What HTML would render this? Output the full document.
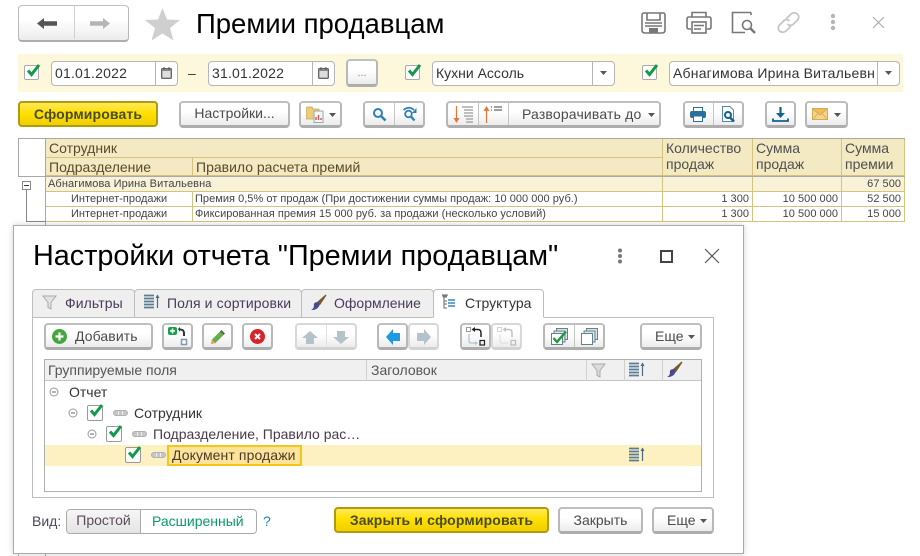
<!DOCTYPE html>
<html lang="ru"><head><meta charset="utf-8"><title>Премии продавцам</title>
<style>
*{box-sizing:border-box}
html,body{margin:0;padding:0;background:#fff}
#p{position:relative;width:920px;height:556px;overflow:hidden;background:#fff;font-family:"Liberation Sans",sans-serif;font-size:14px;color:#4b4b4b}
#p div,#p span.a,#p svg{position:absolute}
.t{white-space:nowrap;line-height:16px}
.btn{background:linear-gradient(#fff 40%,#ececec);border:2px solid #b8b8b8;border-top-color:#c0c0c0;border-bottom:3px solid #adadad;border-radius:4px;text-align:center;line-height:21px;white-space:nowrap}
.dis{border-color:#d8d8d8;border-bottom-color:#d2d2d2}
.y{background:linear-gradient(#ffe95a,#ffe100 45%,#f0cf00);border:2px solid #b09a10;border-radius:4px;font-weight:bold;color:#4a4a2a;text-align:center;line-height:22px;white-space:nowrap;letter-spacing:.13px}
.inp{background:#fff;border:1px solid #b5b5b5;border-radius:4px;color:#333;line-height:23px;padding-left:3px;white-space:nowrap;overflow:hidden}
.v{width:1px;background:#c4c4c4}
.h{background:#f3eac3;border-right:1px solid #d4c27d;border-bottom:1px solid #d4c27d;padding-left:3px;color:#5b4a2a;line-height:16px;white-space:nowrap}
.c{font-size:11px;line-height:14px;color:#444;border-right:1px solid #d4c27d;border-bottom:1px solid #d4c27d;white-space:nowrap;overflow:hidden;padding:0 3px;letter-spacing:.03px}
.g{background:#f8f2d9}
.r{text-align:right}
.tab{background:#efefef;border:1px solid #bdbdbd;border-radius:4px 4px 0 0;height:29px;line-height:27px;color:#4a3a5a;white-space:nowrap}
</style></head><body>
<div id="p">

<!-- nav -->
<div class="btn" style="left:18px;top:5px;width:111px;height:37px;border-width:1px;border-bottom-width:2px"></div>
<div class="v" style="left:74px;top:6px;height:33px;background:#d0d0d0"></div>
<svg style="left:36px;top:16px" width="22" height="15" viewBox="0 0 22 15"><path d="M1 7.500 8 2V5.300H21V9.700H8V13Z" fill="#555"/></svg>
<svg style="left:89px;top:16px" width="22" height="15" viewBox="0 0 22 15"><path d="M21 7.500 14 2V5.300H1V9.700H14V13Z" fill="#b5b5b5"/></svg>
<svg style="left:144px;top:7px" width="37" height="34" viewBox="0 0 37 34"><path d="M18.500 1 23 12.500 36 13 26 21 29.500 33.500 18.500 26.500 7.500 33.500 11 21 1 13 14 12.500Z" fill="#cfcfcf"/></svg>
<div class="t" style="left:196px;top:7px;font-size:27.500px;line-height:34px;color:#000">Премии продавцам</div>

<!-- top right -->
<svg style="left:641px;top:11px" width="25" height="23" viewBox="0 0 25 23" fill="none" stroke="#777" stroke-width="1.600"><path d="M3 2H22Q24 2 24 4V19Q24 22 21 22H4Q1 22 1 19V4Q1 2 3 2Z"/><path d="M6 2V9H19V2M4 12H21M4 15H21"/><rect x="8" y="17" width="9" height="5" fill="#777" stroke="none"/></svg>
<svg style="left:686px;top:11px" width="26" height="23" viewBox="0 0 26 23" fill="none" stroke="#777" stroke-width="1.600"><path d="M6 6V1.500H20V6M5 18H3Q1 18 1 16V8Q1 6 3 6H23Q25 6 25 8V16Q25 18 23 18H21"/><rect x="6" y="11" width="14" height="11"/><path d="M8 14.500H18M8 18H15"/></svg>
<svg style="left:731px;top:11px" width="26" height="23" viewBox="0 0 26 23" fill="none" stroke="#777" stroke-width="1.600"><path d="M20 1.500H1.500V21.500H14M20 1.500V4"/><circle cx="16" cy="14" r="4.500"/><path d="M19.500 17.500 24 22" stroke-width="2.400"/></svg>
<svg style="left:776px;top:11px" width="25" height="23" viewBox="0 0 25 23" fill="none" stroke="#c4c4c4" stroke-width="1.700"><path d="M10 8 15 3Q18 .5 21.500 3 24 6 21.500 9L17 13.500Q14 15.500 11.500 13"/><path d="M15 15 10 20Q7 22.500 3.500 20 1 17 3.500 14L8 9.500Q11 7.500 13.500 10"/></svg>
<svg style="left:830px;top:13px" width="6" height="18" viewBox="0 0 6 18" fill="#b5b5b5"><circle cx="3" cy="3" r="2.200"/><circle cx="3" cy="9" r="2.200"/><circle cx="3" cy="15" r="2.200"/></svg>
<svg style="left:872px;top:16px" width="13" height="13" viewBox="0 0 13 13" stroke="#aaa" stroke-width="1.100"><path d="M1 1 12 12M12 1 1 12"/></svg>

<!-- filter -->
<div style="left:18px;top:54px;width:885px;height:38px;background:#fdf8dc"></div>
<div style="left:24px;top:65px;width:15px;height:15px;background:#fff;border:1px solid #aaa;border-radius:2px"></div>
<svg style="left:26px;top:63px" width="15" height="14" viewBox="0 0 15 14"><path d="M2 7.500 5.500 11.500 13 2" fill="none" stroke="#12994a" stroke-width="3"/></svg>
<div class="inp" style="left:51px;top:61px;width:127px;height:25px;letter-spacing:.2px">01.01.2022</div>
<div class="v" style="left:155px;top:62px;height:23px;background:#b5b5b5"></div>
<svg style="left:161px;top:67px" width="11" height="12" viewBox="0 0 11 12"><rect x=".5" y="1.500" width="10" height="10" rx="1" fill="#8a8a8a" stroke="#666"/><rect x="1.500" y="4" width="8" height="6.500" fill="#ddd"/><path d="M3 0V3M8 0V3" stroke="#555"/></svg>
<div class="t" style="left:188px;top:65px;color:#333">–</div>
<div class="inp" style="left:208px;top:61px;width:127px;height:25px;letter-spacing:.2px">31.01.2022</div>
<div class="v" style="left:312px;top:62px;height:23px;background:#b5b5b5"></div>
<svg style="left:318px;top:67px" width="11" height="12" viewBox="0 0 11 12"><rect x=".5" y="1.500" width="10" height="10" rx="1" fill="#8a8a8a" stroke="#666"/><rect x="1.500" y="4" width="8" height="6.500" fill="#ddd"/><path d="M3 0V3M8 0V3" stroke="#555"/></svg>
<div class="btn" style="left:346px;top:59px;width:32px;height:28px;font-size:11px;line-height:24px;color:#888">...</div>
<div style="left:405px;top:65px;width:15px;height:15px;background:#fff;border:1px solid #aaa;border-radius:2px"></div>
<svg style="left:407px;top:63px" width="15" height="14" viewBox="0 0 15 14"><path d="M2 7.500 5.500 11.500 13 2" fill="none" stroke="#12994a" stroke-width="3"/></svg>
<div class="inp" style="left:432px;top:61px;width:183px;height:25px">Кухни Ассоль</div>
<div class="v" style="left:592px;top:62px;height:23px;background:#b5b5b5"></div>
<svg style="left:600px;top:71px" width="7" height="4"><path d="M0 0H7L3.500 4Z" fill="#555"/></svg>
<div style="left:642px;top:65px;width:15px;height:15px;background:#fff;border:1px solid #aaa;border-radius:2px"></div>
<svg style="left:644px;top:63px" width="15" height="14" viewBox="0 0 15 14"><path d="M2 7.500 5.500 11.500 13 2" fill="none" stroke="#12994a" stroke-width="3"/></svg>
<div class="inp" style="left:669px;top:61px;width:231px;height:25px;letter-spacing:.2px"><span style="display:block;width:201px;overflow:hidden">Абнагимова Ирина Витальевна</span></div>
<div class="v" style="left:877px;top:62px;height:23px;background:#b5b5b5"></div>
<svg style="left:885px;top:71px" width="7" height="4"><path d="M0 0H7L3.500 4Z" fill="#555"/></svg>

<!-- buttons -->
<div class="y" style="left:18px;top:101px;width:140px;height:26px">Сформировать</div>
<div class="btn" style="left:179px;top:101px;width:111px;height:27px">Настройки...</div>
<div class="btn" style="left:299px;top:101px;width:43px;height:27px"></div>
<svg style="left:306px;top:106px" width="18" height="17" viewBox="0 0 18 17"><path d="M0 3 1 1H6L7 3H13V13H0Z" fill="#eccb7a" stroke="#c9a24f" stroke-width=".8"/><rect x="8" y="5" width="9" height="11.500" fill="#f5f5f5" stroke="#9aa"/><path d="M10 14V11M12.500 14V9M15 14V12" stroke="#c55" stroke-width="1.400"/></svg>
<svg style="left:329px;top:113px" width="7" height="4"><path d="M0 0H7L3.500 4Z" fill="#555"/></svg>

<div class="btn" style="left:363px;top:101px;width:62px;height:27px"></div>
<div class="v" style="left:394px;top:103px;height:22px"></div>
<svg style="left:372px;top:107px" width="15" height="15" viewBox="0 0 15 15" fill="none" stroke="#2e7fb5" stroke-width="2"><circle cx="6" cy="6" r="4"/><path d="M9 9 13.500 13.500" stroke-width="2.500"/></svg>
<svg style="left:402px;top:106px" width="16" height="16" viewBox="0 0 16 16" fill="none" stroke="#2e7fb5" stroke-width="1.800"><circle cx="6.500" cy="8" r="3.300"/><path d="M9 10.500 12.500 14.500" stroke-width="2.300"/><path d="M1.500 4Q7 -.5 12 4"/><path d="M14.500 2V7H10Z" fill="#2e7fb5" stroke="none"/></svg>

<div class="btn" style="left:446px;top:101px;width:215px;height:27px;line-height:23px;text-align:left;padding-left:74px;letter-spacing:.17px">Разворачивать до</div>
<div class="v" style="left:478px;top:103px;height:22px"></div>
<div class="v" style="left:508px;top:103px;height:22px"></div>
<svg style="left:452px;top:105px" width="22" height="19" viewBox="0 0 22 19"><path d="M4.500 1V17" stroke="#e8743a" stroke-width="1.200"/><path d="M1.500 13 4.500 18 7.500 13Z" fill="#e8743a"/><path d="M10 2H21M12 5H21M12 8H21M12 11H21M14 14H21M14 17H21" stroke="#999" stroke-width="1.200"/></svg>
<svg style="left:482px;top:105px" width="22" height="19" viewBox="0 0 22 19"><path d="M4.500 2V18" stroke="#e8743a" stroke-width="1.200"/><path d="M1.500 6 4.500 1 7.500 6Z" fill="#e8743a"/><path d="M9 2H10M12 2H20M9 5H10M12 5H20" stroke="#666" stroke-width="1.200"/></svg>
<svg style="left:648px;top:113px" width="7" height="4"><path d="M0 0H7L3.500 4Z" fill="#555"/></svg>

<div class="btn" style="left:683px;top:101px;width:61px;height:27px"></div>
<div class="v" style="left:713px;top:103px;height:22px"></div>
<svg style="left:690px;top:107px" width="16" height="15" viewBox="0 0 16 15"><rect x="3.500" y=".5" width="9" height="4" fill="#fff" stroke="#2b6f9e"/><rect x="0" y="4" width="16" height="7" rx="2" fill="#2b6f9e"/><rect x="3.500" y="9" width="9" height="5.500" fill="#fff" stroke="#2b6f9e"/></svg>
<svg style="left:721px;top:106px" width="16" height="17" viewBox="0 0 16 17"><path d="M1.500 .5H9L12.500 4V15.500H1.500Z" fill="#fff" stroke="#5a86a6"/><circle cx="7" cy="9" r="3" fill="none" stroke="#14608f" stroke-width="2"/><path d="M9 11.500 13 15.500" stroke="#14608f" stroke-width="2.500"/></svg>
<div class="btn" style="left:765px;top:101px;width:31px;height:27px"></div>
<svg style="left:772px;top:106px" width="17" height="16" viewBox="0 0 17 16"><path d="M8.500 1V10" stroke="#14608f" stroke-width="2.200"/><path d="M4 7H13L8.500 12Z" fill="#14608f"/><path d="M1 12.500V15H16V12.500" fill="none" stroke="#14608f" stroke-width="1.800"/></svg>
<div class="btn" style="left:805px;top:101px;width:43px;height:27px"></div>
<svg style="left:812px;top:108px" width="16" height="13" viewBox="0 0 16 13"><rect x=".5" y=".5" width="15" height="11" fill="#f4d48d" stroke="#d9a94c"/><path d="M1 1 8 7 15 1" fill="#eebd62" stroke="#d9a94c"/><path d="M1 11 6 5.500M15 11 10 5.500" fill="none" stroke="#e0b05a"/></svg>
<svg style="left:834px;top:113px" width="7" height="4"><path d="M0 0H7L3.500 4Z" fill="#555"/></svg>

<!-- report table -->
<div style="left:18px;top:138px;width:887px;height:1px;background:#a8a8a8"></div>
<div style="left:18px;top:138px;width:1px;height:39px;background:#a8a8a8"></div>
<div style="left:45px;top:139px;width:1px;height:86px;background:#a8a8a8"></div>
<div style="left:18px;top:176px;width:887px;height:1px;background:#a8a8a8"></div>
<div class="h" style="left:46px;top:139px;width:617px;height:19px;line-height:19px">Сотрудник</div>
<div class="h" style="left:46px;top:158px;width:147px;height:18px;line-height:18px">Подразделение</div>
<div class="h" style="left:193px;top:158px;width:470px;height:18px;line-height:18px">Правило расчета премий</div>
<div class="h" style="left:663px;top:139px;width:90px;height:37px;white-space:normal;line-height:16px;padding-top:1px;color:#4f4f4f">Количество продаж</div>
<div class="h" style="left:753px;top:139px;width:89px;height:37px;white-space:normal;padding-top:1px;color:#4f4f4f">Сумма продаж</div>
<div class="h" style="left:842px;top:139px;width:63px;height:37px;white-space:normal;padding-top:1px;color:#4f4f4f">Сумма премии</div>

<div class="c g" style="left:46px;top:177px;width:617px;height:15px;padding-left:2px;line-height:15px;letter-spacing:.1px">Абнагимова Ирина Витальевна</div>
<div class="c g" style="left:663px;top:177px;width:90px;height:15px"></div>
<div class="c g" style="left:753px;top:177px;width:89px;height:15px"></div>
<div class="c g r" style="left:842px;top:177px;width:63px;height:15px;line-height:15px">67 500</div>

<div class="c" style="left:46px;top:192px;width:147px;height:15px;padding-left:25px">Интернет-продажи</div>
<div class="c" style="left:193px;top:192px;width:470px;height:15px;padding-left:2px">Премия 0,5% от продаж (При достижении суммы продаж: 10 000 000 руб.)</div>
<div class="c r" style="left:663px;top:192px;width:90px;height:15px">1 300</div>
<div class="c r" style="left:753px;top:192px;width:89px;height:15px">10 500 000</div>
<div class="c r" style="left:842px;top:192px;width:63px;height:15px">52 500</div>

<div class="c" style="left:46px;top:207px;width:147px;height:15px;padding-left:25px">Интернет-продажи</div>
<div class="c" style="left:193px;top:207px;width:470px;height:15px;padding-left:2px">Фиксированная премия 15 000 руб. за продажи (несколько условий)</div>
<div class="c r" style="left:663px;top:207px;width:90px;height:15px">1 300</div>
<div class="c r" style="left:753px;top:207px;width:89px;height:15px">10 500 000</div>
<div class="c r" style="left:842px;top:207px;width:63px;height:15px">15 000</div>

<svg style="left:22px;top:181px" width="24" height="41" viewBox="0 0 24 41"><rect x=".5" y=".5" width="8" height="8" fill="#fff" stroke="#888"/><path d="M2 4.500H7" stroke="#333"/><path d="M4.500 9V40.500H24" fill="none" stroke="#888"/></svg>

<!-- table remnants under dialog -->
<div style="left:18px;top:553px;width:1px;height:3px;background:#bbb"></div>
<div style="left:45px;top:553px;width:1px;height:3px;background:#a8a8a8"></div>

<!-- dialog -->
<div style="left:13px;top:225px;width:731px;height:329px;background:#fff;border:1px solid #a9a9a9;box-shadow:0 0 6px rgba(0,0,0,.18)"></div>
<div class="t" style="left:33px;top:238px;font-size:28.800px;line-height:36px;color:#000">Настройки отчета "Премии продавцам"</div>
<svg style="left:617px;top:248px" width="6" height="16" viewBox="0 0 6 16" fill="#777"><circle cx="3" cy="2.500" r="2"/><circle cx="3" cy="8" r="2"/><circle cx="3" cy="13.500" r="2"/></svg>
<div style="left:660px;top:250px;width:13px;height:13px;border:2px solid #444"></div>
<svg style="left:704px;top:248px" width="16" height="16" viewBox="0 0 16 16" stroke="#555" stroke-width="1.200"><path d="M1 1 15 15M15 1 1 15"/></svg>

<!-- tabs -->
<div style="left:32px;top:317px;width:682px;height:181px;border:1px solid #bdbdbd;background:#fff"></div>
<div class="tab" style="left:32px;top:289px;width:103px;padding-left:32px;letter-spacing:.1px">Фильтры</div>
<div class="tab" style="left:134px;top:289px;width:168px;padding-left:32px;letter-spacing:.1px">Поля и сортировки</div>
<div class="tab" style="left:301px;top:289px;width:133px;padding-left:32px">Оформление</div>
<div class="tab" style="left:433px;top:289px;width:111px;padding-left:31px;background:#fff;height:29px;border-bottom:1px solid #fff;color:#333">Структура</div>
<svg style="left:42px;top:295px" width="15" height="15" viewBox="0 0 15 15"><path d="M1 1H14L9 7.500V14L6 12.500V7.500Z" fill="#e2e2e2" stroke="#aaa"/></svg>
<svg style="left:143px;top:294px" width="18" height="16" viewBox="0 0 18 16"><path d="M1 1.500H11M1 4.500H11M1 7.500H11M1 10.500H11M1 13.500H11" stroke="#5b7c93" stroke-width="1.700"/><path d="M14.500 1V14" stroke="#4a6a80" stroke-width="1.200"/><path d="M12.500 4 14.500 .5 16.500 4Z" fill="#4a6a80"/></svg>
<svg style="left:310px;top:294px" width="17" height="17" viewBox="0 0 17 17"><path d="M16 1 8 8 10 10Z" fill="#7a5a2a" stroke="#7a5a2a" stroke-width="1.200"/><path d="M8 8Q3 8 4 12 3.500 15 1 16 8 16.500 10 10Z" fill="#4a4a8a"/></svg>
<svg style="left:441px;top:294px" width="16" height="16" viewBox="0 0 16 16"><path d="M1 1H7M2 1V3M3 3V14H6M3 7H6M3 10H6" fill="none" stroke="#666"/><rect x="2" y="1" width="4" height="2.500" fill="#777"/><path d="M7 6H14M7 9H14M7 12H14" stroke="#3a86b8" stroke-width="1.500"/></svg>

<!-- dialog toolbar -->
<div class="btn" style="left:44px;top:323px;width:109px;height:27px;text-align:left;padding-left:29px;line-height:23px;letter-spacing:.1px">Добавить</div>
<svg style="left:52px;top:329px" width="15" height="15" viewBox="0 0 15 15"><circle cx="7.500" cy="7.500" r="7.500" fill="#43a63e"/><path d="M7.500 3.500V11.500M3.500 7.500H11.500" stroke="#fff" stroke-width="2.200"/></svg>
<div class="btn" style="left:162px;top:323px;width:31px;height:27px"></div>
<svg style="left:168px;top:327px" width="20" height="19" viewBox="0 0 20 19"><rect x="0" y="0" width="9" height="8" rx="2" fill="#15a04a"/><path d="M4.500 1.500V6.500M2 4H7" stroke="#fff" stroke-width="1.500"/><path d="M10 2 12 0V1.500Q17 1.500 17 6.500V9H15V6Q15 3.500 12 3.500V5Z" fill="#333"/><rect x="13.500" y="12.500" width="5" height="5" fill="#fff" stroke="#7b9bb5" stroke-width="1.500"/></svg>
<div class="btn" style="left:202px;top:323px;width:31px;height:27px"></div>
<svg style="left:210px;top:329px" width="16" height="16" viewBox="0 0 16 16"><path d="M11.500 1 15 4.500 5.500 14 1 15 2 10.500Z" fill="#67ad4d"/><path d="M2 10.500 1 15 5.500 14Z" fill="#e3a44e"/><path d="M11.500 1 15 4.500 13.500 6 10 2.500Z" fill="#5a6a5a"/></svg>
<div class="btn" style="left:242px;top:323px;width:31px;height:27px"></div>
<svg style="left:250px;top:329px" width="15" height="15" viewBox="0 0 15 15"><circle cx="7.500" cy="7.500" r="7.500" fill="#d8232a"/><path d="M5 5 10 10M10 5 5 10" stroke="#fff" stroke-width="2"/></svg>

<div class="btn dis" style="left:295px;top:323px;width:62px;height:27px"></div>
<div class="v" style="left:326px;top:325px;height:22px;background:#e2e2e2"></div>
<svg style="left:302px;top:331px" width="16" height="13" viewBox="0 0 16 13"><path d="M8 0 16 7H12V13H4V7H0Z" fill="#b5c2c9"/></svg>
<svg style="left:333px;top:331px" width="16" height="13" viewBox="0 0 16 13"><path d="M8 13 16 6H12V0H4V6H0Z" fill="#b5c2c9"/></svg>

<div class="btn" style="left:377px;top:323px;width:31px;height:27px"></div>
<div class="btn dis" style="left:408px;top:323px;width:31px;height:27px"></div>
<svg style="left:386px;top:329px" width="14" height="16" viewBox="0 0 14 16"><path d="M0 8 7 0V4H14V12H7V16Z" fill="#1e9ae0"/></svg>
<svg style="left:417px;top:329px" width="14" height="16" viewBox="0 0 14 16"><path d="M14 8 7 0V4H0V12H7V16Z" fill="#b5c2c9"/></svg>

<div class="btn" style="left:460px;top:323px;width:31px;height:27px"></div>
<div class="btn dis" style="left:491px;top:323px;width:31px;height:27px"></div>
<svg style="left:466px;top:327px" width="20" height="19" viewBox="0 0 20 19" fill="none"><rect x=".5" y=".5" width="4" height="4" stroke="#999"/><rect x="14" y="13.500" width="4.500" height="4.500" stroke="#222" stroke-width="1.200"/><path d="M3 7V14Q3 16 5 16H11" stroke="#a9c8da" stroke-width="1.300"/><path d="M9 14 12 16 9 18Z" fill="#a9c8da"/><path d="M8 2.500H12Q15 2.500 15 6V10" stroke="#222" stroke-width="1.500"/><path d="M9 0V5L5.500 2.500Z" fill="#222"/></svg>
<svg style="left:497px;top:327px" width="20" height="19" viewBox="0 0 20 19" fill="none" opacity=".4"><rect x=".5" y=".5" width="4" height="4" stroke="#999"/><rect x="14" y="13.500" width="4.500" height="4.500" stroke="#666" stroke-width="1.200"/><path d="M3 7V14Q3 16 5 16H11" stroke="#a9c8da" stroke-width="1.300"/><path d="M8 2.500H12Q15 2.500 15 6V10" stroke="#666" stroke-width="1.500"/><path d="M9 0V5L5.500 2.500Z" fill="#666"/></svg>

<div class="btn" style="left:543px;top:323px;width:62px;height:27px"></div>
<div class="v" style="left:574px;top:325px;height:22px"></div>
<svg style="left:551px;top:328px" width="17" height="17" viewBox="0 0 17 17"><rect x="5.500" y=".5" width="11" height="11" fill="#dce5e8" stroke="#66808c"/><rect x="3" y="3" width="11" height="11" fill="#dce5e8" stroke="#66808c"/><rect x=".5" y="5.500" width="11" height="11" fill="#fff" stroke="#66808c"/><path d="M2.500 10 6 14 15 3.500" fill="none" stroke="#1d9a3f" stroke-width="2.400"/></svg>
<svg style="left:581px;top:328px" width="17" height="17" viewBox="0 0 17 17"><rect x="5.500" y=".5" width="11" height="11" fill="#dce5e8" stroke="#66808c"/><rect x="3" y="3" width="11" height="11" fill="#dce5e8" stroke="#66808c"/><rect x=".5" y="5.500" width="11" height="11" fill="#fff" stroke="#66808c"/></svg>

<div class="btn" style="left:640px;top:323px;width:62px;height:27px;line-height:23px;text-align:left;padding-left:13px">Еще</div>
<svg style="left:688px;top:335px" width="7" height="4"><path d="M0 0H7L3.500 4Z" fill="#555"/></svg>

<!-- tree table -->
<div style="left:44px;top:359px;width:658px;height:133px;border:1px solid #b0b0b0;background:#fff"></div>
<div style="left:45px;top:360px;width:656px;height:21px;background:#f0f0f0;border-bottom:1px solid #c4c4c4"></div>
<div class="t" style="left:48px;top:362px;color:#555">Группируемые поля</div>
<div class="v" style="left:366px;top:360px;height:21px;background:#d0d0d0"></div>
<div class="t" style="left:371px;top:362px;color:#555">Заголовок</div>
<div class="v" style="left:586px;top:360px;height:21px;background:#d0d0d0"></div>
<div class="v" style="left:624px;top:360px;height:21px;background:#d0d0d0"></div>
<div class="v" style="left:662px;top:360px;height:21px;background:#d0d0d0"></div>
<svg style="left:591px;top:363px" width="15" height="15" viewBox="0 0 15 15"><path d="M1 1H14L9 7.500V14L6 12.500V7.500Z" fill="#dcdcdc" stroke="#aaa"/></svg>
<svg style="left:628px;top:362px" width="18" height="16" viewBox="0 0 18 16"><path d="M1 1.500H11M1 4.500H11M1 7.500H11M1 10.500H11M1 13.500H11" stroke="#5b7c93" stroke-width="1.700"/><path d="M14.500 1V14" stroke="#4a6a80" stroke-width="1.200"/><path d="M12.500 4 14.500 .5 16.500 4Z" fill="#4a6a80"/></svg>
<svg style="left:666px;top:361px" width="17" height="17" viewBox="0 0 17 17"><path d="M16 1 8 8 10 10Z" fill="#7a5a2a" stroke="#7a5a2a" stroke-width="1.200"/><path d="M8 8Q3 8 4 12 3.500 15 1 16 8 16.500 10 10Z" fill="#4a4a8a"/></svg>

<div style="left:45px;top:445px;width:656px;height:21px;background:#fdf1c2"></div>

<svg style="left:49px;top:387px" width="10" height="10"><circle cx="5" cy="5" r="4" fill="#fff" stroke="#999"/><path d="M3 5H7" stroke="#666"/></svg>
<div class="t" style="left:69px;top:384px;color:#333">Отчет</div>

<svg style="left:68px;top:408px" width="10" height="10"><circle cx="5" cy="5" r="4" fill="#fff" stroke="#999"/><path d="M3 5H7" stroke="#666"/></svg>
<div style="left:87px;top:405px;width:16px;height:16px;background:#fff;border:1px solid #999;border-radius:2px"></div>
<svg style="left:89px;top:403px" width="15" height="14" viewBox="0 0 15 14"><path d="M2 7.500 5.500 11.500 13 2" fill="none" stroke="#12994a" stroke-width="3"/></svg>
<svg style="left:113px;top:410px" width="15" height="6"><rect x=".5" y=".5" width="14" height="5" rx="2.500" fill="#c6c6c6" stroke="#b0b0b0"/><path d="M5.500 1V5M9.500 1V5" stroke="#eee"/></svg>
<div class="t" style="left:134px;top:405px;color:#333">Сотрудник</div>

<svg style="left:87px;top:429px" width="10" height="10"><circle cx="5" cy="5" r="4" fill="#fff" stroke="#999"/><path d="M3 5H7" stroke="#666"/></svg>
<div style="left:106px;top:426px;width:16px;height:16px;background:#fff;border:1px solid #999;border-radius:2px"></div>
<svg style="left:108px;top:424px" width="15" height="14" viewBox="0 0 15 14"><path d="M2 7.500 5.500 11.500 13 2" fill="none" stroke="#12994a" stroke-width="3"/></svg>
<svg style="left:132px;top:431px" width="15" height="6"><rect x=".5" y=".5" width="14" height="5" rx="2.500" fill="#c6c6c6" stroke="#b0b0b0"/><path d="M5.500 1V5M9.500 1V5" stroke="#eee"/></svg>
<div class="t" style="left:153px;top:426px;color:#4a3a4a">Подразделение, Правило рас…</div>

<div style="left:125px;top:447px;width:16px;height:16px;background:#fff;border:1px solid #999;border-radius:2px"></div>
<svg style="left:127px;top:445px" width="15" height="14" viewBox="0 0 15 14"><path d="M2 7.500 5.500 11.500 13 2" fill="none" stroke="#12994a" stroke-width="3"/></svg>
<svg style="left:151px;top:452px" width="15" height="6"><rect x=".5" y=".5" width="14" height="5" rx="2.500" fill="#c6c6c6" stroke="#b0b0b0"/><path d="M5.500 1V5M9.500 1V5" stroke="#eee"/></svg>
<div class="t" style="left:167px;top:445px;width:135px;height:21px;background:#fde49a;border:2px solid #f5c518;padding-left:3px;line-height:17px;color:#4a3a2a;letter-spacing:.1px">Документ продажи</div>
<svg style="left:628px;top:447px" width="18" height="16" viewBox="0 0 18 16"><path d="M1 1.500H11M1 4.500H11M1 7.500H11M1 10.500H11M1 13.500H11" stroke="#5b7c93" stroke-width="1.700"/><path d="M14.500 1V14" stroke="#4a6a80" stroke-width="1.200"/><path d="M12.500 4 14.500 .5 16.500 4Z" fill="#4a6a80"/></svg>

<!-- bottom -->
<div class="t" style="left:32px;top:513px;color:#4a4a5a">Вид:</div>
<div style="left:66px;top:509px;width:191px;height:25px;border:1px solid #aaa;border-radius:4px;background:#fff"></div>
<div style="left:67px;top:510px;width:74px;height:23px;background:linear-gradient(#f6f6f6,#e4e4e4);border-right:1px solid #aaa;border-radius:3px 0 0 3px;text-align:center;line-height:21px;color:#5a4a5a">Простой</div>
<div class="t" style="left:152px;top:513px;color:#0a9a6a">Расширенный</div>
<div class="t" style="left:263px;top:513px;color:#1f7fc0">?</div>
<div class="y" style="left:334px;top:507px;width:215px;height:26px">Закрыть и сформировать</div>
<div class="btn" style="left:558px;top:507px;width:85px;height:27px;line-height:22px">Закрыть</div>
<div class="btn" style="left:652px;top:507px;width:62px;height:27px;line-height:22px;text-align:left;padding-left:13px">Еще</div>
<svg style="left:700px;top:519px" width="7" height="4"><path d="M0 0H7L3.500 4Z" fill="#555"/></svg>
</div>
</body></html>
